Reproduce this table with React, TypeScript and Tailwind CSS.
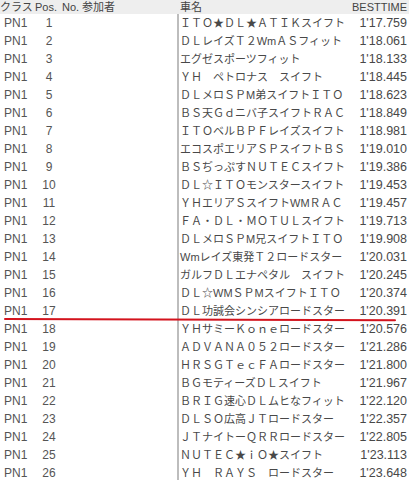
import React from "react";

type Row = { pos: number; car: string; time: string };

const rows: Row[] = [
  { pos: 1, car: "ＩＴＯ★ＤＬ★ＡＴＩＫスイフト", time: "1'17.759" },
  { pos: 2, car: "ＤＬレイズＴ２WmＡＳフィット", time: "1'18.061" },
  { pos: 3, car: "エグゼスポーツフィット", time: "1'18.133" },
  { pos: 4, car: "ＹＨ　ペトロナス　スイフト", time: "1'18.445" },
  { pos: 5, car: "ＤＬメロＳＰM弟スイフトＩＴＯ", time: "1'18.623" },
  { pos: 6, car: "ＢＳ天Ｇｄニバ子スイフトＲＡＣ", time: "1'18.849" },
  { pos: 7, car: "ＩＴＯベルＢＰＦレイズスイフト", time: "1'18.981" },
  { pos: 8, car: "エコスポエリアＳＰスイフトＢＳ", time: "1'19.010" },
  { pos: 9, car: "ＢＳぢっぷすＮＵＴＥＣスイフト", time: "1'19.386" },
  { pos: 10, car: "ＤＬ☆ＩＴＯモンスタースイフト", time: "1'19.453" },
  { pos: 11, car: "ＹＨエリアＳスイフトWMＲＡＣ", time: "1'19.457" },
  { pos: 12, car: "ＦＡ・ＤＬ・ＭＯＴＵＬスイフト", time: "1'19.713" },
  { pos: 13, car: "ＤＬメロＳＰM兄スイフトＩＴＯ", time: "1'19.908" },
  { pos: 14, car: "Wmレイズ東発Ｔ２ロードスター", time: "1'20.031" },
  { pos: 15, car: "ガルフＤＬエナペタル　スイフト", time: "1'20.245" },
  { pos: 16, car: "ＤＬ☆WMＳＰMスイフトＩＴＯ", time: "1'20.374" },
  { pos: 17, car: "ＤＬ功誠会シンシアロードスター", time: "1'20.391" },
  { pos: 18, car: "ＹＨサミーＫｏｎｅロードスター", time: "1'20.576" },
  { pos: 19, car: "ＡＤＶＡＮＡ０５２ロードスター", time: "1'21.286" },
  { pos: 20, car: "ＨＲＳＧＴｅｃＦＡロードスター", time: "1'21.800" },
  { pos: 21, car: "ＢＧモティーズＤＬスイフト", time: "1'21.967" },
  { pos: 22, car: "ＢＲＩＧ速心ＤＬムヒなフィット", time: "1'22.120" },
  { pos: 23, car: "ＤＬＳＯ広高ＪＴロードスター", time: "1'22.357" },
  { pos: 24, car: "ＪＴナイトーＱＲＲロードスター", time: "1'22.805" },
  { pos: 25, car: "ＮＵＴＥＣ★ｉＯ★スイフト", time: "1'23.113" },
  { pos: 26, car: "ＹＨ　ＲＡＹＳ　ロードスター", time: "1'23.648" },
];

export default function App() {
  return (
    <div className="relative w-[409px] h-[480px] overflow-hidden bg-white text-[#555555] font-['Liberation_Sans','Noto_Sans_CJK_JP',sans-serif]">
      {/* header */}
      <div className="flex h-[14px] items-center bg-[#eeeeee] text-[11px] leading-[14px] text-[#444444]">
        <span className="w-[35px] shrink-0">クラス</span>
        <span className="w-[27px] shrink-0">Pos.</span>
        <span className="w-[20px] shrink-0">No.</span>
        <span className="w-[98px] shrink-0">参加者</span>
        <span className="flex-1">車名</span>
        <span className="pr-[2px]">BESTTIME</span>
      </div>

      {rows.map((r) => (
        <div key={r.pos} className="flex h-[18px] items-center text-[12px] leading-[18px]">
          <span className="w-[40px] shrink-0 pl-[4px]">PN1</span>
          <span className="w-[18px] shrink-0 text-center">{r.pos}</span>
          <span className="w-[119px] shrink-0" />
          <span className="flex-1 h-full border-l-2 border-[#bdbdbd] pl-[1px] text-[11px] text-[#484848] whitespace-nowrap">
            {r.car}
          </span>
          <span className="pr-[2px] text-[12.5px] text-[#484848]">{r.time}</span>
        </div>
      ))}

      {/* hand-drawn red marker under position 17 */}
      <svg className="pointer-events-none absolute inset-0" width="409" height="480">
        <line x1="5" y1="319" x2="395" y2="320.3" stroke="#d3131d" strokeWidth="2" strokeLinecap="round" />
      </svg>
    </div>
  );
}
